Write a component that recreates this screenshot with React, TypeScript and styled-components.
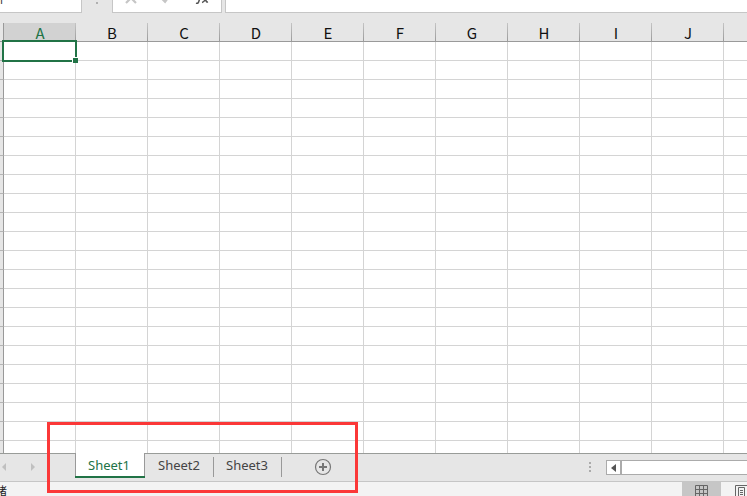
import React from "react";
import styled, { createGlobalStyle, css } from "styled-components";

const green = "#217346";

const GlobalStyle = createGlobalStyle`
  *, *::before, *::after { box-sizing: border-box; }
  body {
    margin: 0;
    overflow: hidden;
    background: #e6e6e6;
    color: #444;
    font-family: "Noto Sans", "Noto Sans CJK SC", sans-serif;
  }
  button, input { font: inherit; color: inherit; margin: 0; padding: 0; border: 0; background: none; border-radius: 0; }
  svg { display: block; }
`;

const Window = styled.div`
  display: flex;
  flex-direction: column;
  height: 100vh;
  overflow: hidden;
`;

const FormulaBar = styled.div`
  display: flex;
  align-items: flex-end;
  flex: none;
  height: 13px;
  overflow: hidden;
`;

const fieldBox = css`
  height: 24px;
  background: #fff;
  border: 1px solid #c6c6c6;
`;

const NameBox = styled.input`
  && {
    ${fieldBox}
    width: 82px;
    border-left: 0;
    font-size: 12px;
    text-indent: -10px;
    padding-bottom: 4px;
  }
`;

const Grip = styled.div`
  width: 30px;
  height: 13px;
  display: flex;
  justify-content: center;
  padding-top: 2px;
  &::before { content: ""; width: 2px; height: 2px; background: #b0b0b0; }
`;

const FormulaButtons = styled.div`
  ${fieldBox}
  width: 110px;
  display: flex;
  align-items: flex-end;
  justify-content: space-between;
  padding: 0 12px 8px;
`;

const FormulaInput = styled.input`
  && {
    ${fieldBox}
    flex: 1;
    min-width: 0;
    margin-left: 3px;
    border-right: 0;
  }
`;

const IconButton = styled.button`
  display: flex;
  align-items: center;
  justify-content: center;
`;

const GridArea = styled.main`
  position: relative;
  flex: 1;
  min-height: 0;
  overflow: hidden;
  padding-top: 10px;
  border-bottom: 1px solid #999c99;
`;

const Sheet = styled.table`
  table-layout: fixed;
  width: 1156px;
  border-spacing: 0;
  border-collapse: separate;
`;

const GutterCol = styled.col`
  width: 4px;
`;

const Corner = styled.td`
  padding: 0;
  border-right: 1px solid #999;
  border-bottom: 1px solid #999;
`;

const ColumnHead = styled.th<{ $selected?: boolean }>`
  height: 19px;
  padding: 2px 0 0 1px;
  border-right: 1px solid;
  border-image: linear-gradient(#c6c6c6, #999) 1;
  border-bottom: 1px solid #999;
  background: ${(p) => (p.$selected ? "#d2d2d2" : "#e6e6e6")};
  color: ${(p) => (p.$selected ? green : "#111")};
  font: 400 15px/16px "Noto Sans CJK SC", sans-serif;
  text-align: center;
`;

const RowHead = styled.th`
  height: 19px;
  padding: 0;
  background: #e6e6e6;
  border-right: 1px solid #999;
  border-bottom: 1px solid #b5b5b5;
`;

const Cell = styled.td`
  position: relative;
  height: 19px;
  padding: 0;
  background: #fff;
  border-right: 1px solid #d4d4d4;
  border-bottom: 1px solid #d4d4d4;
`;

const Selection = styled.div`
  position: absolute;
  z-index: 1;
  inset: -2px;
  border: 2px solid ${green};
  &::after {
    content: "";
    position: absolute;
    right: -3px;
    bottom: -3px;
    width: 6px;
    height: 6px;
    background: ${green};
    border-top: 1px solid #fff;
    border-left: 1px solid #fff;
  }
`;

const SheetBar = styled.div`
  display: flex;
  flex: none;
  height: 28px;
  border-bottom: 1px solid #c6c6c6;
`;

const SheetNav = styled.div`
  display: flex;
  align-items: center;
  gap: 23px;
  width: 75px;
  height: 26px;
`;

const Tabs = styled.div`
  display: flex;
  align-items: flex-start;
`;

const activeTab = css`
  && {
    position: relative;
    height: 25px;
    width: 70px;
    margin: -1px 1px 0 0;
    padding: 0 2px 1px 0;
    background: #fff;
    color: ${green};
    border-left: 1px solid #999;
    border-right: 1px solid #999;
  }
  &::after {
    content: "";
    position: absolute;
    left: -1px;
    right: -1px;
    bottom: 0;
    height: 2px;
    background: ${green};
  }
`;

const idleTab = css`
  && {
    align-items: flex-start;
    padding-left: 12px;
  }
  &::after {
    content: "";
    width: 1px;
    height: 20px;
    margin: 3px 0 0 auto;
    background: #999;
  }
`;

const Tab = styled.button<{ $active?: boolean }>`
  display: flex;
  align-items: center;
  justify-content: center;
  width: 68px;
  height: 23px;
  font-size: 13px;
  line-height: 22px;
  ${(p) => (p.$active ? activeTab : idleTab)}
`;

const AddSheet = styled(IconButton)`
  width: 18px;
  height: 26px;
  margin-left: 32px;
`;

const ScrollArea = styled.div`
  display: flex;
  align-items: center;
  width: 159px;
  height: 27px;
  margin-left: auto;
`;

const SplitGrip = styled.div`
  display: grid;
  gap: 2px;
  width: 18px;
  padding: 0 0 2px 1px;
`;

const Dot = styled.i`
  width: 2px;
  height: 2px;
  background: #ababab;
`;

const ScrollButton = styled(IconButton)`
  && {
    width: 16px;
    height: 15px;
    background: #fff;
    border: 1px solid #ababab;
    border-right: 2px solid #ababab;
  }
`;

const ScrollTrack = styled.div`
  flex: 1;
  height: 15px;
  background: #fff;
  border: 1px solid #ababab;
  border-width: 1px 0;
`;

const StatusBar = styled.footer`
  display: flex;
  flex: none;
  height: 14px;
  overflow: hidden;
  background: #f3f3f3;
`;

const StatusText = styled.span`
  margin-left: -17px;
  color: #222;
  font: 12px/18px "Noto Sans CJK SC", sans-serif;
`;

const ViewButtons = styled.div`
  display: flex;
  margin-left: auto;
  height: 24px;
`;

const ViewButton = styled(IconButton)<{ $active?: boolean }>`
  && {
    width: 39px;
    height: 24px;
    align-items: flex-start;
    padding-top: 3px;
    background: ${(p) => (p.$active ? "#c6c6c6" : "transparent")};
  }
  &&:last-child { margin-right: -13px; padding-left: 2px; }
`;

const Highlight = styled.div`
  position: absolute;
  z-index: 3;
  left: 47px;
  bottom: 3px;
  width: 311px;
  height: 71px;
  border: 3px solid #fb3838;
  pointer-events: none;
`;

const columns = "ABCDEFGHIJ".split("").concat(Array(6).fill(""));
const rows = Array.from({ length: 22 }, (_, i) => i + 1);
const sheets = ["Sheet1", "Sheet2", "Sheet3"];

export default function App() {
  return (
    <Window>
      <GlobalStyle />
      <FormulaBar>
        <NameBox aria-label="Name box" defaultValue="A1" />
        <Grip />
        <FormulaButtons>
          <IconButton aria-label="Cancel">
            <svg width="12" height="12" viewBox="0 0 12 12" stroke="#c6c6c6" strokeWidth="2.2"><path d="M1 1l10 10M11 1L1 11" /></svg>
          </IconButton>
          <IconButton aria-label="Enter">
            <svg width="12" height="12" viewBox="0 0 12 12" fill="none" stroke="#c6c6c6" strokeWidth="3.2"><path d="M1 5l4 4 6-8" /></svg>
          </IconButton>
          <IconButton aria-label="Insert function">
            <svg width="14" height="12" viewBox="0 0 14 12" fill="none" stroke="#555" strokeWidth="1.5"><path d="M1 11.200c3 1 3-3 4-6s2-5 4-4M4 4.500h4M8 5c3-1 2 6 5 5M13 5c-2 0-3 5-6 5.500" /></svg>
          </IconButton>
        </FormulaButtons>
        <FormulaInput aria-label="Formula" />
      </FormulaBar>

      <GridArea>
        <Sheet>
          <colgroup>
            <GutterCol />
            {columns.map((_, i) => <col key={i} />)}
          </colgroup>
          <thead>
            <tr>
              <Corner />
              {columns.map((c, i) => <ColumnHead key={i} scope="col" $selected={i === 0}>{c}</ColumnHead>)}
            </tr>
          </thead>
          <tbody>
            {rows.map((r) => (
              <tr key={r}>
                <RowHead scope="row" aria-label={`Row ${r}`} />
                {columns.map((_, i) => <Cell key={i}>{r === 1 && i === 0 && <Selection />}</Cell>)}
              </tr>
            ))}
          </tbody>
        </Sheet>
      </GridArea>

      <SheetBar>
        <SheetNav>
          <IconButton aria-label="Previous sheet">
            <svg width="7" height="8" viewBox="0 0 7 8" fill="#c0c0c0"><path d="M6 0v8L2 4z" /></svg>
          </IconButton>
          <IconButton aria-label="Next sheet">
            <svg width="7" height="8" viewBox="0 0 7 8" fill="#c0c0c0"><path d="M1 0v8l4-4z" /></svg>
          </IconButton>
        </SheetNav>
        <Tabs role="tablist">
          {sheets.map((s, i) => <Tab key={s} role="tab" aria-selected={i === 0} $active={i === 0}>{s}</Tab>)}
        </Tabs>
        <AddSheet aria-label="New sheet">
          <svg width="18" height="18" viewBox="0 0 18 18" fill="none" stroke="#777"><circle cx="9" cy="9" r="7.5" strokeWidth="1.2" /><path d="M9 5v8M5 9h8" strokeWidth="2" /></svg>
        </AddSheet>
        <ScrollArea>
          <SplitGrip><Dot /><Dot /><Dot /></SplitGrip>
          <ScrollButton aria-label="Scroll left">
            <svg width="5" height="8" viewBox="0 0 5 8" fill="#555"><path d="M5 0v8L0 4z" /></svg>
          </ScrollButton>
          <ScrollTrack />
        </ScrollArea>
      </SheetBar>

      <StatusBar>
        <StatusText>就绪</StatusText>
        <ViewButtons>
          <ViewButton $active aria-label="Normal view">
            <svg width="13" height="13" viewBox="0 0 13 13" fill="none" stroke="#666"><path d="M.5.5h12v12H.5zM4.5 0v13M8.5 0v13M0 4.5h13M0 8.5h13" /></svg>
          </ViewButton>
          <ViewButton aria-label="Page layout view">
            <svg width="13" height="13" viewBox="0 0 13 13" fill="none" stroke="#666"><path d="M.5.5h12v12H.5zM3.5 2.5h6v9h-6zM5 5.5h3M5 7.5h3M5 9.5h3" /></svg>
          </ViewButton>
        </ViewButtons>
      </StatusBar>
      <Highlight />
    </Window>
  );
}
